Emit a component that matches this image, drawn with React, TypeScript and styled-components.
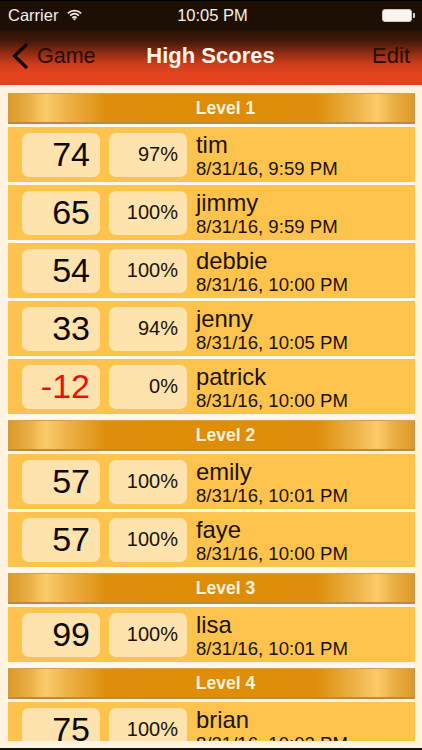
import React from 'react';
import styled, { createGlobalStyle } from 'styled-components';

const GlobalStyle = createGlobalStyle`
  html, body { margin: 0; padding: 0; background: #fdf3df; }
  * { box-sizing: border-box; }
`;

const Screen = styled.div`
  width: 422px;
  height: 750px;
  display: flex;
  flex-direction: column;
  overflow: hidden;
  background: #fdf3df;
  font-family: "Liberation Sans", Arial, sans-serif;
  border-top: 1px solid #000;
  border-bottom: 2px solid #111;
`;

const StatusBar = styled.div`
  height: 29px;
  flex: none;
  background: #1e0f05;
  color: #f4efe9;
  display: grid;
  grid-template-columns: 1fr auto 1fr;
  align-items: center;
  padding: 0 5px 1px 8px;
  font-size: 16.5px;
`;

const Carrier = styled.div`
  display: flex;
  align-items: center;
  gap: 9px;
`;

const Battery = styled.div`
  justify-self: end;
  width: 30px;
  height: 13px;
  margin-right: 5px;
  background: #f8f5ef;
  border: 1px solid #cfc8c0;
  border-radius: 3px;
  position: relative;
  &::after {
    content: '';
    position: absolute;
    right: -4px;
    top: 3px;
    width: 2px;
    height: 5px;
    background: #d8d2cb;
    border-radius: 0 1px 1px 0;
  }
`;

const NavBar = styled.div`
  height: 55px;
  flex: none;
  display: grid;
  grid-template-columns: 1fr auto 1fr;
  align-items: center;
  padding: 0 12px 3px 11px;
  background: linear-gradient(180deg, #2a1206 0%, #3e170a 18%, #8e2c12 42%, #d23f1b 64%, #e2431c 80%, #df421b 100%);
`;

const BackLink = styled.div`
  display: flex;
  align-items: center;
  gap: 8px;
  color: #2a0d05;
  font-size: 21.5px;
`;

const NavTitle = styled.div`
  color: #fdf3ea;
  font-size: 22px;
  font-weight: 700;
`;

const EditLink = styled.div`
  justify-self: end;
  color: #2a0d05;
  font-size: 22px;
`;

const List = styled.div`
  flex: 1;
  min-height: 0;
  margin: 8px 7px 7px 7px;
  padding-left: 1px;
  overflow: hidden;
  display: flex;
  flex-direction: column;
  background: #fff8e8;
`;

const SectionHeader = styled.div`
  flex: none;
  height: 31px;
  display: flex;
  align-items: center;
  justify-content: center;
  padding: 1px 0 0 28px;
  color: #fdf3df;
  font-size: 17.5px;
  font-weight: 700;
  border-top: 1px solid #d9a24a;
  border-bottom: 2px solid #b98a45;
  border-left: 1px solid #c99a4c;
  border-right: 1px solid #c99a4c;
  background: linear-gradient(
    90deg,
    #dc9a2a 0%,
    #e9ae45 5%,
    #fdcb6b 9%,
    #eeb44c 14%,
    #de8e0c 24%,
    #df8d06 50%,
    #de8e0c 76%,
    #eeb44c 86%,
    #fdcb6b 91%,
    #e9ae45 95%,
    #dc9a2a 100%
  );
  margin-bottom: 3px;
  &:not(:first-child) {
    margin-top: 6px;
  }
`;

const Row = styled.div`
  flex: none;
  height: 55px;
  display: flex;
  align-items: center;
  gap: 9px;
  padding: 0 14px;
  background: #fec34d;
  & + & {
    margin-top: 3px;
  }
`;

const Box = styled.div`
  width: 78px;
  height: 44px;
  flex: none;
  display: flex;
  align-items: center;
  justify-content: flex-end;
  border-radius: 7px;
  background: #fee3ae;
`;

const Score = styled(Box)<{ $negative: boolean }>`
  padding-right: 10px;
  font-size: 34px;
  color: ${p => (p.$negative ? '#f00d0d' : '#0c0803')};
`;

const Percent = styled(Box)`
  padding-right: 9px;
  font-size: 20px;
  color: #1a1206;
`;

const Info = styled.div`
  display: flex;
  flex-direction: column;
  gap: 1px;
  padding-top: 1px;
  color: #1a1206;
`;

const Name = styled.div`
  font-size: 23.8px;
  line-height: 25px;
`;

const Stamp = styled.div`
  font-size: 18.6px;
  line-height: 21px;
`;

type Entry = { score: number; percent: number; name: string; date: string };

const LEVELS: { title: string; entries: Entry[] }[] = [
  {
    title: 'Level 1',
    entries: [
      { score: 74, percent: 97, name: 'tim', date: '8/31/16, 9:59 PM' },
      { score: 65, percent: 100, name: 'jimmy', date: '8/31/16, 9:59 PM' },
      { score: 54, percent: 100, name: 'debbie', date: '8/31/16, 10:00 PM' },
      { score: 33, percent: 94, name: 'jenny', date: '8/31/16, 10:05 PM' },
      { score: -12, percent: 0, name: 'patrick', date: '8/31/16, 10:00 PM' },
    ],
  },
  {
    title: 'Level 2',
    entries: [
      { score: 57, percent: 100, name: 'emily', date: '8/31/16, 10:01 PM' },
      { score: 57, percent: 100, name: 'faye', date: '8/31/16, 10:00 PM' },
    ],
  },
  {
    title: 'Level 3',
    entries: [{ score: 99, percent: 100, name: 'lisa', date: '8/31/16, 10:01 PM' }],
  },
  {
    title: 'Level 4',
    entries: [{ score: 75, percent: 100, name: 'brian', date: '8/31/16, 10:02 PM' }],
  },
];

const WifiIcon = () => (
  <svg width="15" height="12" viewBox="0 0 17 13" fill="none" stroke="#f4efe9" strokeWidth="1.9">
    <path d="M1 4.6C5.4.6 11.6.6 16 4.6" />
    <path d="M3.5 7.2c3-2.7 7-2.7 10 0" />
    <path d="M6 9.7c1.6-1.3 3.4-1.3 5 0" />
    <path d="M8.5 12.8l-1.9-2.1c1.2-.8 2.6-.8 3.8 0z" fill="#f4efe9" stroke="none" />
  </svg>
);

const BackChevron = () => (
  <svg width="18" height="28" viewBox="0 0 18 28" fill="none" stroke="#120503" strokeWidth="3.2">
    <path d="M16 2 3.5 14 16 26" />
  </svg>
);

const App = () => {
  return (
    <Screen>
      <GlobalStyle />
      <StatusBar>
        <Carrier>
          Carrier
          <WifiIcon />
        </Carrier>
        <div>10:05 PM</div>
        <Battery />
      </StatusBar>
      <NavBar>
        <BackLink>
          <BackChevron />
          Game
        </BackLink>
        <NavTitle>High Scores</NavTitle>
        <EditLink>Edit</EditLink>
      </NavBar>
      <List>
        {LEVELS.map(level => (
          <React.Fragment key={level.title}>
            <SectionHeader>{level.title}</SectionHeader>
            {level.entries.map(entry => (
              <Row key={entry.name}>
                <Score $negative={entry.score < 0}>{entry.score}</Score>
                <Percent>{entry.percent}%</Percent>
                <Info>
                  <Name>{entry.name}</Name>
                  <Stamp>{entry.date}</Stamp>
                </Info>
              </Row>
            ))}
          </React.Fragment>
        ))}
      </List>
    </Screen>
  );
};

export default App;
